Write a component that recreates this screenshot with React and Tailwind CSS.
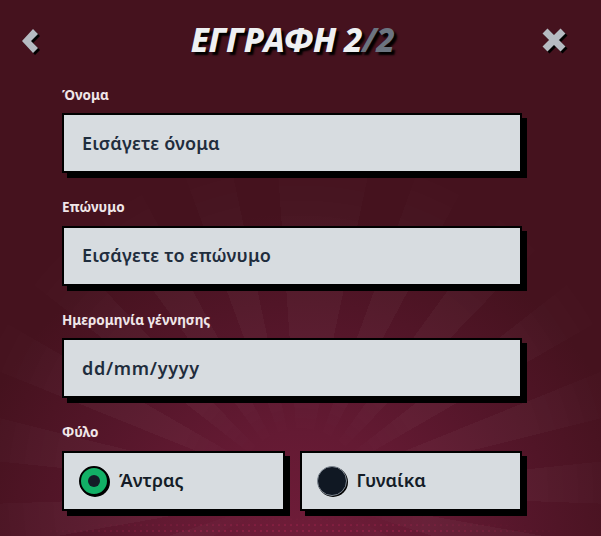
function Field({ label, placeholder, wide }) {
  return (
    <div>
      <label className="block text-[13.5px] leading-[18px] font-bold text-[#f0e6e8] mb-[9.5px]">{label}</label>
      <div className={`h-[60px] border-2 border-black bg-[#d7dce0] shadow-[5px_5px_0_#000] flex items-center pl-[18px] text-[18px] font-semibold text-[#1f2d3d] ${wide ? 'tracking-[0.7px]' : 'tracking-[0.2px]'}`}>
        {placeholder}
      </div>
    </div>
  );
}

function Radio({ label, checked }) {
  return (
    <div className="flex-1 h-[60px] border-2 border-black bg-[#d7dce0] shadow-[5px_5px_0_#000] flex items-center pl-[15px] gap-[10px] text-[18px] font-semibold text-[#141c27]">
      {checked ? (
        <span className="w-[30px] h-[30px] rounded-full border-2 border-black bg-[#12b066] flex items-center justify-center shadow-[1px_1px_0_#000]">
          <span className="w-[12px] h-[12px] rounded-full bg-[#141c27]" />
        </span>
      ) : (
        <span className="w-[30px] h-[30px] rounded-full border border-[#7d8690] bg-[#101823] shadow-[1px_1px_0_#000]" />
      )}
      {label}
    </div>
  );
}

export default function App() {
  return (
    <div className="relative w-[601px] h-[536px] overflow-hidden bg-[#45121e] font-['Noto_Sans',sans-serif]">
      {/* rays + dots behind the form */}
      <div className="absolute inset-0 bg-[radial-gradient(circle_at_50%_105%,#711d3a_0px,#641a33_130px,#55162a_230px,#45121e_350px)]" />
      <div className="absolute inset-0 bg-[repeating-conic-gradient(from_4deg_at_50%_92%,rgba(255,255,255,0.03)_0deg_8deg,transparent_8deg_16deg)] [mask-image:radial-gradient(circle_at_50%_92%,transparent_50px,black_130px,black_240px,transparent_360px)]" />
      <div className="absolute inset-x-0 bottom-0 h-[20px] bg-[radial-gradient(circle,rgba(190,40,90,0.35)_1.2px,transparent_1.5px)] bg-[length:6px_6px] [mask-image:radial-gradient(ellipse_at_50%_100%,black_30%,transparent_65%)]" />

      <div className="relative">
        <div className="h-[85.5px] flex items-start justify-between">
          <svg width="20" height="28" viewBox="0 0 20 28" className="mt-[27px] ml-[20px] [filter:drop-shadow(2px_2px_0_#000)]">
            <path d="M2 14 L13 2 L18 7 L11 14 L18 21 L13 26 Z" fill="#b6bbc2" />
          </svg>
          <h1 className="mt-[18px] ml-[4px] text-[33px] leading-[44px] font-extrabold italic text-[#eef0f2] [text-shadow:3px_3px_2px_#000] tracking-[-0.5px]">
            ΕΓΓΡΑΦΗ 2<span className="text-[#6b7480]">/2</span>
          </h1>
          <svg width="26" height="26" viewBox="0 0 26 26" className="mt-[27px] mr-[34px] [filter:drop-shadow(2px_2px_0_#000)]">
            <path d="M4 4 L22 22 M22 4 L4 22" stroke="#b6bbc2" strokeWidth="7" fill="none" />
          </svg>
        </div>

        <div className="ml-[62px] w-[460px] flex flex-col gap-[25px]">
          <Field label="Όνομα" placeholder="Εισάγετε όνομα" />
          <Field label="Επώνυμο" placeholder="Εισάγετε το επώνυμο" />
          <Field label="Ημερομηνία γέννησης" placeholder="dd/mm/yyyy" wide />
          <div>
            <label className="block text-[13.5px] leading-[18px] font-bold text-[#f0e6e8] mb-[9.5px]">Φύλο</label>
            <div className="flex gap-[15px]">
              <Radio label="Άντρας" checked />
              <Radio label="Γυναίκα" />
            </div>
          </div>
        </div>
      </div>
    </div>
  );
}
